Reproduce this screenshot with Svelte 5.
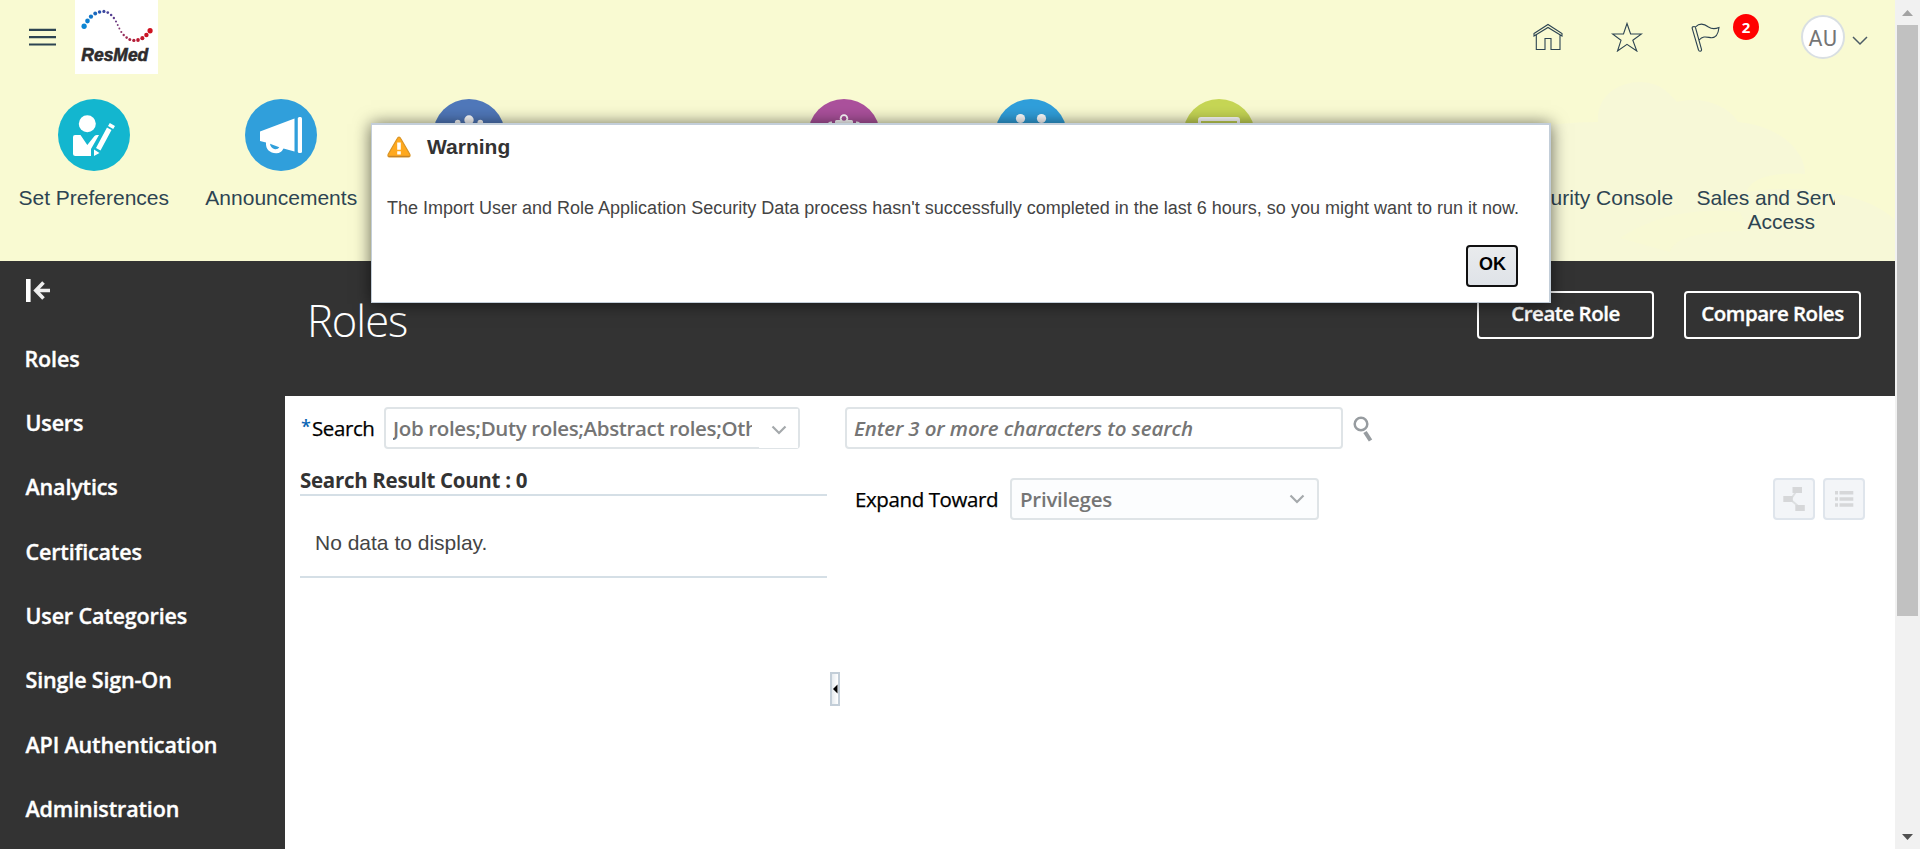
<script>
  const navItems = ['Roles', 'Users', 'Analytics', 'Certificates', 'User Categories', 'Single Sign-On', 'API Authentication', 'Administration'];
  const tiles = [
    { icon: 'prefs', label: 'Set Preferences', color: '#13b6cf' },
    { icon: 'horn', label: 'Announcements', color: '#309fdb' },
    { icon: 'team', label: '', color: '#5078ba' },
    { icon: '', label: '' },
    { icon: 'badge', label: '', color: '#ab519c' },
    { icon: 'pair', label: '', color: '#309fdb' },
    { icon: 'screen', label: '', color: '#c6d655' },
    { icon: '', label: '' },
    { icon: '', label: 'Security Console' },
    { icon: '', label: 'Sales and Service Access' }
  ];
  const dots = [
    [17.5, 26.3, 2.7, '#0c86d4'], [21, 21, 2.4, '#0c7fd0'], [24.6, 16.6, 2.2, '#1276c8'], [29, 13.5, 2, '#1a68bd'],
    [33.5, 12, 1.8, '#2a55b0'], [38, 11.4, 1.6, '#3c479f'], [42, 12.6, 1.4, '#4a4398'], [45.5, 15, 1.3, '#554092'],
    [48.3, 18, 1.2, '#5f3d8c'], [50.5, 21.5, 1.1, '#6a3c84'], [52.3, 25, 1, '#763a7b'], [54, 28.5, 1, '#823872'],
    [56, 32, 1.1, '#8c3468'], [58.5, 35, 1.2, '#962f5c'], [61.5, 37.6, 1.3, '#a02a50'], [64.8, 39.4, 1.5, '#aa2444'],
    [69, 40.4, 1.7, '#b31f3a'], [73.3, 40, 1.9, '#bc1a32'], [77.8, 38.2, 2.1, '#c3172b'], [82, 35, 2.3, '#c91425'], [85.8, 30.7, 2.7, '#cf1220']
  ];
</script>

<div class="page">
  <div class="content">
    <header>
      <svg class="cloud" width="500" height="261" viewBox="0 0 500 261">
        <path fill="#f7f8d7" d="M60 261V150Q100 122 178 122C176 95 200 82 220 82C240 82 250 94 257 102C285 95 310 108 318 122C355 125 385 148 385 174C360 172 330 176 327 192C360 186 440 186 475 220V261Z" />
        <path fill="#f8f9d4" d="M200 238Q250 205 320 212Q330 230 320 231Q255 232 250 252Z" />
      </svg>
      <div class="topbar">
        <svg class="burger" width="28" height="18" viewBox="0 0 28 18"><path d="M0 1.8h27M0 9.2h27M0 16.5h27" stroke="#2d4452" stroke-width="2.2" /></svg>
        <svg class="logo" width="83" height="74" viewBox="0 0 83 74">
          <rect width="83" height="74" fill="#fff" />
          <g transform="translate(-7.8 0) scale(.966 1)">
            {#each dots as [x, y, r, fill]}<circle cx={x} cy={y} {r} {fill} />{/each}
          </g>
          <text x="6.3" y="61.2" textLength="67" lengthAdjust="spacingAndGlyphs">ResMed</text>
        </svg>
        <div class="tools">
          <svg width="30" height="28" viewBox="0 0 30 28" fill="none" stroke="#2d4452" stroke-width="1.1"><path d="M1 10.5L15 1.5L29 10.5V13L15 4.5L1 13ZM3.3 11.8V26.5H12V15.5H18V26.5H27V11.8" /></svg>
          <svg class="star" width="32" height="30" viewBox="0 0 32 30" fill="none" stroke="#2d4452" stroke-width="1.1"><path d="M16 1.5L19.6 12H30.5L21.8 18.3L25.8 29L16 22.3L6.5 29L10 18.3L1.5 12H12.5Z" /></svg>
          <svg class="flag" width="29" height="29" viewBox="0 0 29 29" fill="none" stroke="#2d4452" stroke-width="1.1"><path d="M1.2 5.5Q.9 3.7 2.6 3.6Q4.2 3.3 4.6 5L10.5 26.3Q10.8 28 9.2 28.2Q7.8 28.3 7.5 27ZM4.6 3.8C9 -.5 13.5 1 17.5 4C21 6.4 24 6.2 28 4.5C27.5 9 25.5 14.8 20.5 14.7C16.5 14.4 12 12.2 8.2 17" /></svg>
          <span class="count">2</span>
          <span class="avatar">AU</span>
          <svg class="chev" width="16" height="10" viewBox="0 0 16 10" fill="none" stroke="#4d5c66" stroke-width="1.5"><path d="M1 1L8 8L15 1" /></svg>
        </div>
      </div>
      <div class="springboard">
        {#each tiles as t}
          <div class="tile">
            <svg width="72" height="72" viewBox="0 0 72 72">
              {#if t.icon}<circle cx="36" cy="36" r="36" fill={t.color} />{/if}
              <g fill="#fff">
                {#if t.icon === 'prefs'}
                  <circle cx="29.3" cy="24.8" r="8.5" />
                  <path d="M15 38Q15 36 17 36H22.5L29.3 46L36.5 37Q37.5 36 39 36H41L33 50V57H17.5Q15 57 15 54.5ZM49 28.5L53.5 31L42.5 51.5L38 49ZM50 27L51.8 24L57 27L55.2 30ZM36 50.5L41.5 54L36 57Z" />
                {:else if t.icon === 'horn'}
                  <path d="M15 32.5L49.5 19.5V52.5L38.5 49.5Q36 54.5 31 54.2C25 53.8 20.5 51 21 43.5L15 42ZM25 44.7Q25.5 49 30 50.2Q33 50.5 34.3 48.3Z" fill-rule="evenodd" />
                  <rect x="52.8" y="18" width="4.2" height="36" rx="1.5" />
                {:else if t.icon === 'team'}
                  <circle cx="36" cy="21" r="4.7" /><circle cx="24.7" cy="23.5" r="2.8" /><circle cx="47.3" cy="23.5" r="2.8" />
                {:else if t.icon === 'badge'}
                  <path d="M27 30V22.5Q27 21 28.5 21H43.5Q45 21 45 22.5V30ZM19 26Q20 22 24 22.5V27ZM53 26Q52 22 48 22.5V27Z" />
                  <circle cx="36" cy="19.5" r="3.3" fill="none" stroke="#fff" stroke-width="2" /><circle cx="36" cy="19.5" r="2.3" fill={t.color} />
                {:else if t.icon === 'pair'}
                  <circle cx="25.5" cy="19.5" r="4.6" /><circle cx="46.5" cy="19.5" r="4.6" />
                {:else if t.icon === 'screen'}
                  <path d="M15 30V21Q15 18 18 18H54Q57 18 57 21V30H54V22H18V30Z" />
                {/if}
              </g>
            </svg>
            <span>{t.label}</span>
          </div>
        {/each}
      </div>
    </header>

    <div class="body">
      <nav>
        <svg class="collapse" width="25" height="23" viewBox="0 0 25 23"><path d="M0 0H4.6V23H0Z" fill="#fff" /><path d="M24 11.5H10M17.5 3.5L9.8 11.5L17.5 19.5" fill="none" stroke="#eee" stroke-width="3.6" /></svg>
        {#each navItems as item}<a>{item}</a>{/each}
      </nav>
      <main>
        <div class="titlebar">
          <h1>Roles</h1>
          <button class="ghost">Create Role</button>
          <button class="ghost">Compare Roles</button>
        </div>
        <div class="panels">
          <section class="left">
            <div class="search">
              <span class="req">*</span><label>Search</label>
              <div class="field multi"><span>Job roles;Duty roles;Abstract roles;Other roles</span>
                <i><svg width="16" height="11" viewBox="0 0 16 11" fill="none" stroke="#a5a9ac" stroke-width="2.2"><path d="M1.5 1.5L8 8L14.5 1.5" /></svg></i>
              </div>
            </div>
            <h2>Search Result Count : 0</h2>
            <p>No data to display.</p>
          </section>
          <div class="splitter"><span><svg width="6" height="10" viewBox="0 0 6 10"><path d="M1 5L5.5 .5V9.5Z" /></svg></span></div>
          <section class="right">
            <div class="query">
              <div class="field input">Enter 3 or more characters to search</div>
              <svg width="20" height="26" viewBox="0 0 20 26" fill="none" stroke="#979ca0"><circle cx="8" cy="8" r="6.3" stroke-width="2.5" /><path d="M12 16L17.5 24.5" stroke-width="4" /></svg>
            </div>
            <div class="expand">
              <label>Expand Toward</label>
              <div class="field select"><span>Privileges</span>
                <svg width="16" height="11" viewBox="0 0 16 11" fill="none" stroke="#a5a9ac" stroke-width="2.2"><path d="M1.5 1.5L8 8L14.5 1.5" /></svg>
              </div>
              <button class="tool first"><svg width="24" height="26" viewBox="0 0 24 26" fill="#d6d7d9"><path d="M9 13L14.5 5M9 14L16 20" stroke="#dddfe1" stroke-width="2" /><path d="M10.5 1h9.5v6h-9.5zM1.3 10h9.5v6h-9.5zM13.3 19h9.5v6h-9.5z" /></svg></button>
              <button class="tool"><svg width="20" height="18" viewBox="0 0 20 18" fill="#d6d7d9"><path d="M1 1h3v3.5H1zM5.5 1h13.8v3.5H5.5zM1 7.2h3v3.5H1zM5.5 7.2h13.8v3.5H5.5zM1 13.2h3v3.5H1zM5.5 13.2h13.8v3.5H5.5z" /></svg></button>
            </div>
          </section>
        </div>
      </main>
    </div>
  </div>
  <div class="scrollbar">
    <svg width="11" height="6" viewBox="0 0 11 6"><path d="M0 6L5.5 0L11 6Z" fill="#a3a3a3" /></svg>
    <div class="thumb"></div>
    <svg class="down" width="11" height="6" viewBox="0 0 11 6"><path d="M0 0L5.5 6L11 0Z" fill="#505050" /></svg>
  </div>

  <div class="dialog">
    <div class="head">
      <svg width="24" height="22" viewBox="0 0 24 22"><path d="M12 1.2Q13 1.2 13.7 2.5L22.8 18.3Q23.7 20.8 21.5 20.8H2.5Q.3 20.8 1.2 18.3L10.3 2.5Q11 1.2 12 1.2Z" fill="#ffa91f" stroke="#d99425" stroke-width="1.2" /><path d="M1.5 20.4H22.5" stroke="#c4842a" stroke-width="1.2" /><path d="M10.2 6.5h3.6v7.2h-3.6zM10.2 15.3h3.6v3.2h-3.6z" fill="#fff" /></svg>
      <strong>Warning</strong>
    </div>
    <p>The Import User and Role Application Security Data process hasn't successfully completed in the last 6 hours, so you might want to run it now.</p>
    <button>OK</button>
  </div>
</div>

<style>
  :global(body) { margin: 0; overflow: hidden; }
  * { box-sizing: border-box; }
  svg { display: block; flex: none; }
  .page { width: 1920px; height: 849px; display: flex; position: relative; overflow: hidden; font-family: "Open Sans", sans-serif; }
  .content { width: 1895px; display: flex; flex-direction: column; }
  header { height: 261px; background: #f9fad2; position: relative; font-family: "Liberation Sans", Arial, sans-serif; overflow: hidden; }
  .cloud { position: absolute; left: 1420px; top: 0; }
  .topbar { height: 99px; display: flex; align-items: flex-start; position: relative; }
  .burger { margin: 28px 0 0 29px; }
  .logo { margin-left: 18px; }
  .logo text { font: italic bold 18.5px "Liberation Sans", Arial, sans-serif; fill: #2e2c2d; stroke: #2e2c2d; stroke-width: .6px; }
  .tools { margin-left: auto; padding-right: 27px; display: flex; align-items: flex-start; }
  .tools > svg:first-child { margin-top: 23px; }
  .tools .star { margin: 22px 0 0 47.5px; }
  .tools .flag { margin: 23px 0 0 48px; }
  .count { width: 26px; height: 26px; margin: 14px 0 0 13.5px; border-radius: 50%; background: #f00; color: #fff; font: bold 15px/27px "Open Sans", sans-serif; text-align: center; }
  .avatar { width: 44px; height: 44px; margin: 15px 0 0 42px; border: 2px solid #d9dfe3; border-radius: 50%; background: #fff; color: #757575; font: 21.5px/43px Roboto, sans-serif; letter-spacing: .6px; text-align: center; }
  .tools .chev { margin: 36px 0 0 7px; }
  .springboard { display: flex; width: 1835px; overflow: hidden; position: relative; }
  .tile { flex: 0 0 187.5px; display: flex; flex-direction: column; align-items: center; }
  .tile span { margin-top: 14.5px; max-width: 180px; text-align: center; font-size: 21px; line-height: 24px; color: #2d4452; }
  .body { flex: 1; display: flex; background: #333; }
  nav { width: 285px; padding: 18px 0 0 25.5px; display: flex; flex-direction: column; color: #fff; }
  .collapse { margin-bottom: 24.5px; }
  nav a { height: 64.4px; font-size: 21.5px; font-weight: 600; line-height: 64px; letter-spacing: -.15px; white-space: nowrap; -webkit-text-stroke: .35px #fff; }
  nav a:first-of-type { margin-left: -1px; }
  main { flex: 1; display: flex; flex-direction: column; }
  .titlebar { height: 135px; display: flex; align-items: flex-start; gap: 30px; padding: 30px 34px 0 22px; }
  h1 { margin: 0 auto 0 0; font-size: 43.5px; font-weight: 300; line-height: 60px; color: #fff; letter-spacing: -1px; }
  .ghost { width: 177px; height: 48px; border: 2px solid #fff; border-radius: 4px; background: none; color: #fff; padding: 0 0 4px; font: 600 20.5px "Open Sans", sans-serif; letter-spacing: -.5px; white-space: nowrap; -webkit-text-stroke: .35px #fff; }
  .panels { flex: 1; display: flex; background: #fff; }
  .left { width: 542px; padding: 11px 0 0 15px; font-size: 20px; }
  .search { display: flex; height: 42px; align-items: center; width: 500px; }
  .req { width: 12px; color: #0b66b5; font-size: 18px; font-weight: 600; padding: 0 0 4px 1px; }
  label { font-weight: 400; font-size: 20.5px; letter-spacing: -.4px; color: #000; white-space: nowrap; -webkit-text-stroke: .25px #000; }
  .field { height: 42px; border: 2px solid #dfe4e7; border-radius: 4px; color: #757575; font-size: 20.5px; font-weight: 600; letter-spacing: -.25px; display: flex; align-items: center; white-space: nowrap; }
  .multi { width: 416px; margin-left: auto; position: relative; padding-left: 7px; letter-spacing: -.36px; }
  .multi span { width: 359px; overflow: hidden; }
  .multi i { position: absolute; right: 0; bottom: -1px; width: 39px; height: 39px; background: #fff; display: flex; align-items: center; padding: 3px 0 0 12px; }
  h2 { margin: 16px 0 0; width: 527px; height: 31px; border-bottom: 2px solid #d5dfe6; font-size: 20.5px; line-height: 31px; font-weight: 700; letter-spacing: -.3px; color: #333; }
  .left p { margin: 0; width: 527px; height: 82px; border-bottom: 2px solid #d5dfe6; padding: 35px 0 0 15px; font: 21px/24px "Liberation Sans", Arial, sans-serif; color: #444; }
  .splitter { width: 17px; display: flex; padding: 276px 0 0 3px; }
  .splitter span { width: 10px; height: 34px; border: 2px solid #c3ced8; background: linear-gradient(90deg, #e7ecf0, #fff); display: flex; align-items: center; }
  .right { flex: 1; padding-top: 11px; }
  .query { display: flex; padding-left: 1px; align-items: center; }
  .input { width: 498px; padding-left: 7px; font-style: italic; margin-right: 10px; letter-spacing: -.12px; }
  .query svg { margin-top: 2px; }
  .expand { display: flex; align-items: center; margin-top: 29px; padding: 0 30px 0 11px; }
  .expand label { width: 155px; }
  .select { width: 309px; padding: 0 12px 0 8px; background: #fcfdfe; justify-content: space-between; }
  .tool { width: 42px; height: 42px; border: 2px solid #dfe5ec; border-radius: 4px; background: #f3f5f8; padding: 0; display: flex; align-items: center; justify-content: center; margin-left: 8px; }
  .tool.first { margin-left: auto; }
  .scrollbar { width: 25px; background: #f1f1f1; display: flex; flex-direction: column; align-items: center; padding-top: 10px; }
  .thumb { width: 21px; height: 591px; margin-top: 9px; background: #c1c1c1; }
  .down { margin: auto 0 9px; }
  .dialog { position: absolute; left: 371px; top: 123px; width: 1180px; height: 180px; background: #fff; border: solid #c3ced9; border-width: 2px 2px 1px 1px; box-shadow: 0 1px 16px rgba(0,0,0,.6); padding: 10px 31px 15px 15px; display: flex; flex-direction: column; font-family: "Liberation Sans", Arial, sans-serif; color: #333; }
  .head { display: flex; align-items: center; gap: 16px; height: 24px; }
  .head strong { font-size: 21px; line-height: 22px; margin-top: -1px; }
  .dialog p { margin: 37px 0 25px; font-size: 18px; line-height: 24px; white-space: nowrap; color: #444; }
  .dialog button { width: 52px; height: 42px; margin-left: auto; border: 2px solid #111; border-radius: 4px; background: linear-gradient(#e9ebed, #dfe3e8); padding: 0 0 4px 1px; font: bold 18px "Liberation Sans", Arial, sans-serif; color: #000; }
</style>
